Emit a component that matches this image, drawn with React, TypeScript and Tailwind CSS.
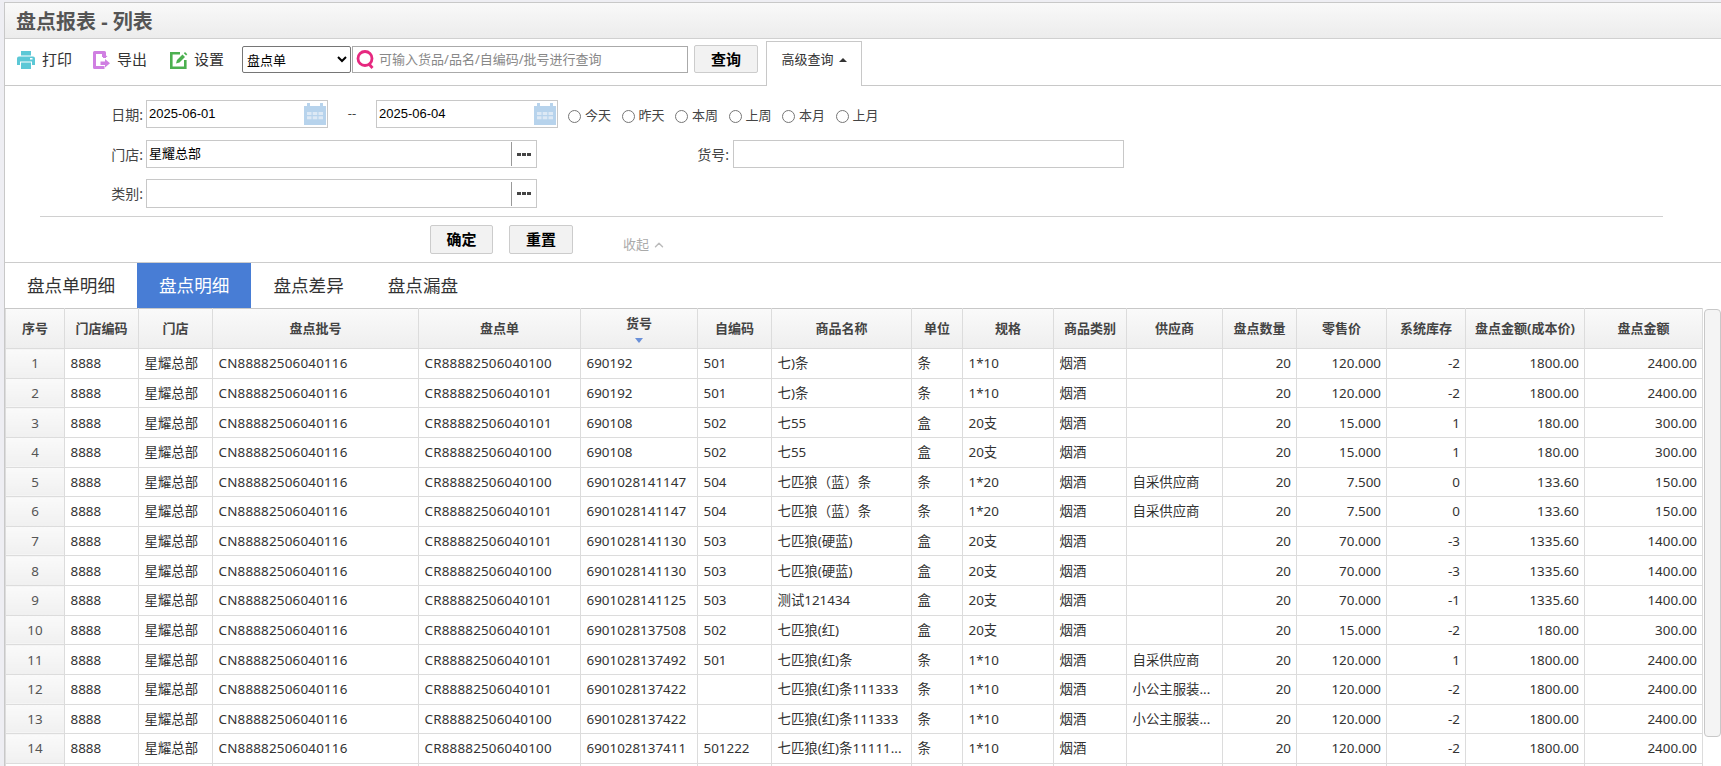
import { ChevronUp } from "lucide-react";

const cols = [
  { title: "序号", width: "w-[59px]" },
  { title: "门店编码", width: "w-[74px]" },
  { title: "门店", width: "w-[74px]" },
  { title: "盘点批号", width: "w-[206px]" },
  { title: "盘点单", width: "w-[162px]" },
  { title: "货号", width: "w-[117px]" },
  { title: "自编码", width: "w-[74px]" },
  { title: "商品名称", width: "w-[140px]" },
  { title: "单位", width: "w-[51px]" },
  { title: "规格", width: "w-[91px]" },
  { title: "商品类别", width: "w-[73px]" },
  { title: "供应商", width: "w-[96px]" },
  { title: "盘点数量", width: "w-[74px]" },
  { title: "零售价", width: "w-[90px]" },
  { title: "系统库存", width: "w-[79px]" },
  { title: "盘点金额(成本价)", width: "w-[119px]" },
  { title: "盘点金额", width: "w-[118px]" },
];

// order, barcode, own code, name, unit, spec, supplier, price, stock, cost, amount
const rows = [
  ["100", "690192", "501", "七)条", "条", "1*10", "", "120.000", "-2", "1800.00", "2400.00"],
  ["101", "690192", "501", "七)条", "条", "1*10", "", "120.000", "-2", "1800.00", "2400.00"],
  ["101", "690108", "502", "七55", "盒", "20支", "", "15.000", "1", "180.00", "300.00"],
  ["100", "690108", "502", "七55", "盒", "20支", "", "15.000", "1", "180.00", "300.00"],
  ["100", "6901028141147", "504", "七匹狼（蓝）条", "条", "1*20", "自采供应商", "7.500", "0", "133.60", "150.00"],
  ["101", "6901028141147", "504", "七匹狼（蓝）条", "条", "1*20", "自采供应商", "7.500", "0", "133.60", "150.00"],
  ["101", "6901028141130", "503", "七匹狼(硬蓝)", "盒", "20支", "", "70.000", "-3", "1335.60", "1400.00"],
  ["100", "6901028141130", "503", "七匹狼(硬蓝)", "盒", "20支", "", "70.000", "-3", "1335.60", "1400.00"],
  ["101", "6901028141125", "503", "测试121434", "盒", "20支", "", "70.000", "-1", "1335.60", "1400.00"],
  ["101", "6901028137508", "502", "七匹狼(红)", "盒", "20支", "", "15.000", "-2", "180.00", "300.00"],
  ["101", "6901028137492", "501", "七匹狼(红)条", "条", "1*10", "自采供应商", "120.000", "1", "1800.00", "2400.00"],
  ["101", "6901028137422", "", "七匹狼(红)条111333", "条", "1*10", "小公主服装...", "120.000", "-2", "1800.00", "2400.00"],
  ["100", "6901028137422", "", "七匹狼(红)条111333", "条", "1*10", "小公主服装...", "120.000", "-2", "1800.00", "2400.00"],
  ["100", "6901028137411", "501222", "七匹狼(红)条11111...", "条", "1*10", "", "120.000", "-2", "1800.00", "2400.00"],
];

function PrinterIcon() {
  return (
    <svg width="18" height="18" viewBox="0 0 18 18" className="shrink-0">
      <path d="M4 0h10v4.500H4z" fill="#5cc8d6" />
      <path d="M2 5.500h14a2 2 0 0 1 2 2V14h-3v-3.500H3V14H0V7.500a2 2 0 0 1 2-2z" fill="#5cc8d6" />
      <rect x="13" y="7" width="2.500" height="1.500" fill="#fff" />
      <path d="M4 11.500h10V18H4z" fill="#5cc8d6" />
    </svg>
  );
}

function ExportIcon() {
  return (
    <svg width="18" height="18" viewBox="0 0 18 18" className="shrink-0">
      <path d="M11.500 7V1.500H1.500v15h10" fill="none" stroke="#d07fe2" strokeWidth="3" strokeLinejoin="round" />
      <path d="M9 0l5.500 6H9z" fill="#d07fe2" />
      <path d="M7.500 10.500H12V8l5 4.200-5 4.200V14H7.500z" fill="#d07fe2" />
    </svg>
  );
}

function EditIcon() {
  return (
    <svg width="18" height="18" viewBox="0 0 18 18" className="shrink-0">
      <path d="M10 2.200H1.300v14.500h14V9" fill="none" stroke="#4cb050" strokeWidth="2.600" />
      <path d="M6 12.500l1-3.500 5.500-5.500 2.500 2.500-5.500 5.500z" fill="#4cb050" />
      <path d="M13.800 2.200L15 1l2.300 2.300-1.200 1.200z" fill="#4cb050" />
    </svg>
  );
}

function SearchIcon() {
  return (
    <svg width="19" height="19" viewBox="0 0 19 19" className="shrink-0">
      <circle cx="9" cy="8.500" r="7" fill="none" stroke="#e6287f" strokeWidth="2.800" />
      <path d="M13 14l3.500 4" stroke="#e6287f" strokeWidth="2.800" />
    </svg>
  );
}

function CalendarIcon() {
  return (
    <svg width="22" height="22" viewBox="0 0 22 22" className="shrink-0">
      <path d="M0 3h3V0h3v3h10V0h3v3h3v19H0z" fill="#b7d3ec" />
      <path
        d="M3 9h4.500v3H3zM8.700 9h4.600v3H8.700zM14.500 9H19v3h-4.500zM3 13.200h4.500v3H3zM8.700 13.200h4.600v3H8.700zM14.500 13.200H19v3h-4.500z"
        fill="#dde9f5"
      />
    </svg>
  );
}

function DateField({ value }: { value: string }) {
  return (
    <div className="flex h-[28px] w-[182px] items-center justify-between border border-[#c8c8c8] pl-[2px] pr-px font-['Liberation_Sans','Noto_Sans_CJK_SC',sans-serif] text-[13px] text-black">
      {value}
      <CalendarIcon />
    </div>
  );
}

function PickerField({ value, tall }: { value?: string; tall?: boolean }) {
  return (
    <div
      className={`flex w-[391px] items-center border border-[#c8c8c8] text-[13px] text-black ${
        tall ? "h-[29px]" : "h-[28px]"
      }`}
    >
      <span className="flex-1 pl-[2px]">{value}</span>
      <span className="flex h-[24px] w-[25px] items-center justify-center gap-px border-l border-[#999]">
        <i className="h-[3px] w-[4px] bg-[#444]" />
        <i className="h-[3px] w-[4px] bg-[#444]" />
        <i className="h-[3px] w-[4px] bg-[#444]" />
      </span>
    </div>
  );
}

function Radio({ label }: { label: string }) {
  return (
    <label className="flex w-[53.5px] items-center gap-[4px] pt-[4px] text-[13px] text-[#444]">
      <input type="radio" name="range" className="h-[13px] w-[13px] shrink-0" />
      {label}
    </label>
  );
}

export default function App() {
  return (
    <div className="h-screen overflow-hidden bg-[#eeeef3] pl-[4px] pt-[2px] font-['Noto_Sans','Noto_Sans_CJK_SC',sans-serif] text-[#333]">
      <div className="h-full border-l border-t border-[#c8c8c8] bg-white">
        <div className="flex h-[36px] items-center border-b border-[#d0d0d0] bg-gradient-to-b from-[#f9f9f9] to-[#ececec] pl-[11px] pt-[3px] text-[20px] font-bold text-[#555]">
          盘点报表 - 列表
        </div>

        <div className="flex h-[47px] items-start border-b border-[#c8c8c8] pt-[7px] text-[15px]">
          <div className="ml-[12px] flex h-[27px] items-center gap-[7px]">
            <PrinterIcon />
            打印
          </div>
          <div className="ml-[21px] flex h-[27px] items-center gap-[6px]">
            <ExportIcon />
            导出
          </div>
          <div className="ml-[23px] flex h-[27px] items-center gap-[6px]">
            <EditIcon />
            设置
          </div>
          <select className="ml-[18px] h-[27px] w-[109px] rounded-[2px] border border-[#767676] bg-white text-[13px] text-black">
            <option>盘点单</option>
          </select>
          <div className="ml-px flex h-[27px] w-[336px] items-center gap-[4px] border border-[#aaa] pl-[3px]">
            <SearchIcon />
            <input
              placeholder="可输入货品/品名/自编码/批号进行查询"
              className="min-w-0 flex-1 text-[13px] outline-none placeholder:text-[#888]"
            />
          </div>
          <button className="-mt-px ml-[6px] h-[28px] w-[64px] rounded-[2px] border border-[#ccc] bg-[#f2f2f2] text-[15px] font-bold text-black">
            查询
          </button>
          <div className="relative -mb-px ml-[8px] flex h-[45px] w-[96px] items-center justify-center gap-[5px] self-end border border-b-0 border-[#c8c8c8] bg-white pb-[9px] text-[13px]">
            高级查询
            <i className="h-0 w-0 border-x-[4px] border-b-[4px] border-x-transparent border-b-[#333]" />
          </div>
        </div>

        <div className="h-[177px] border-b border-[#ccc] pt-[14px] text-[14px]">
          <div className="flex items-center">
            <span className="w-[141px] pr-[3px] text-right text-[#444]">日期:</span>
            <DateField value="2025-06-01" />
            <span className="w-[48px] text-center text-[13px] text-[#444]">--</span>
            <DateField value="2025-06-04" />
            <div className="ml-[10px] flex">
              {["今天", "昨天", "本周", "上周", "本月", "上月"].map((r) => (
                <Radio key={r} label={r} />
              ))}
            </div>
          </div>
          <div className="mt-[12px] flex items-center">
            <span className="w-[141px] pr-[3px] text-right text-[#444]">门店:</span>
            <PickerField value="星耀总部" />
            <span className="w-[196px] pr-[4px] text-right text-[#444]">货号:</span>
            <div className="h-[28px] w-[391px] border border-[#c8c8c8]" />
          </div>
          <div className="mt-[11px] flex items-center">
            <span className="w-[141px] pr-[3px] text-right text-[#444]">类别:</span>
            <PickerField tall />
          </div>
          <div className="ml-[35px] mt-[8px] w-[1623px] border-t border-[#d0d0d0]" />
          <div className="ml-[425px] mt-[8px] flex items-start gap-[16px]">
            <button className="h-[29px] w-[63px] rounded-[2px] border border-[#ccc] bg-[#f2f2f2] text-[15px] font-bold text-black">
              确定
            </button>
            <button className="h-[29px] w-[64px] rounded-[2px] border border-[#ccc] bg-[#f2f2f2] text-[15px] font-bold text-black">
              重置
            </button>
            <span className="ml-[34px] mt-[10px] flex items-center gap-[3px] text-[13px] text-[#aaa]">
              收起
              <ChevronUp size={14} strokeWidth={2.5} className="text-[#bbb]" />
            </span>
          </div>
        </div>

        <div className="flex h-[45px] text-[17.6px] text-[#333]">
          <div className="flex items-center px-[22px]">盘点单明细</div>
          <div className="flex items-center bg-[#487dd5] px-[22px] text-white">盘点明细</div>
          <div className="flex items-center px-[22px]">盘点差异</div>
          <div className="flex items-center px-[22px]">盘点漏盘</div>
        </div>

        <div className="flex items-start">
          <table className="w-[1697px] table-fixed border-collapse text-[13.4px]">
            <colgroup>
              {cols.map((c) => (
                <col key={c.title} className={c.width} />
              ))}
            </colgroup>
            <thead>
              <tr className="h-[40px] bg-gradient-to-b from-[#fafafa] to-[#eeeeee]">
                {cols.map((c) => (
                  <th key={c.title} className="border border-[#dcdcdc] border-t-[#c8c8c8] p-0 text-center text-[13px] font-bold text-[#444]">
                    {c.title}
                    {c.title === "货号" && (
                      <i className="mx-auto mt-[4px] block h-0 w-0 border-x-[4.5px] border-t-[5px] border-x-transparent border-t-[#6a90d8]" />
                    )}
                  </th>
                ))}
              </tr>
            </thead>
            <tbody>
              {rows.map((r, i) => (
                <tr key={i} className="h-[29.64px]">
                  <td className="border border-[#dcdcdc] bg-gradient-to-b from-[#fafafa] to-[#f0f0f0] p-0 text-center text-[#555]">{i + 1}</td>
                  <td className="truncate border border-[#dcdcdc] px-[5.5px]">8888</td>
                  <td className="truncate border border-[#dcdcdc] px-[5.5px]">星耀总部</td>
                  <td className="truncate border border-[#dcdcdc] px-[5.5px] tracking-[0.2px]">CN88882506040116</td>
                  <td className="truncate border border-[#dcdcdc] px-[5.5px] tracking-[0.2px]">CR88882506040{r[0]}</td>
                  <td className="truncate border border-[#dcdcdc] px-[5.5px]">{r[1]}</td>
                  <td className="truncate border border-[#dcdcdc] px-[5.5px]">{r[2]}</td>
                  <td className="truncate border border-[#dcdcdc] px-[5.5px]">{r[3]}</td>
                  <td className="truncate border border-[#dcdcdc] px-[5.5px]">{r[4]}</td>
                  <td className="truncate border border-[#dcdcdc] px-[5.5px]">{r[5]}</td>
                  <td className="truncate border border-[#dcdcdc] px-[5.5px]">烟酒</td>
                  <td className="truncate border border-[#dcdcdc] px-[5.5px]">{r[6]}</td>
                  <td className="border border-[#dcdcdc] pr-[5px] text-right">20</td>
                  <td className="border border-[#dcdcdc] pr-[5px] text-right">{r[7]}</td>
                  <td className="border border-[#dcdcdc] pr-[5px] text-right">{r[8]}</td>
                  <td className="border border-[#dcdcdc] pr-[5px] text-right">{r[9]}</td>
                  <td className="border border-[#dcdcdc] pr-[5px] text-right">{r[10]}</td>
                </tr>
              ))}
              <tr className="h-[29.64px]">
                {cols.map((c) => (
                  <td key={c.title} className="border border-[#dcdcdc]" />
                ))}
              </tr>
            </tbody>
          </table>
          <div className="ml-px flex-1 pt-px">
            <div className="h-[428px] rounded-[4px] border border-[#c8c8c8] bg-[#f4f4f4]" />
          </div>
        </div>
      </div>
    </div>
  );
}
